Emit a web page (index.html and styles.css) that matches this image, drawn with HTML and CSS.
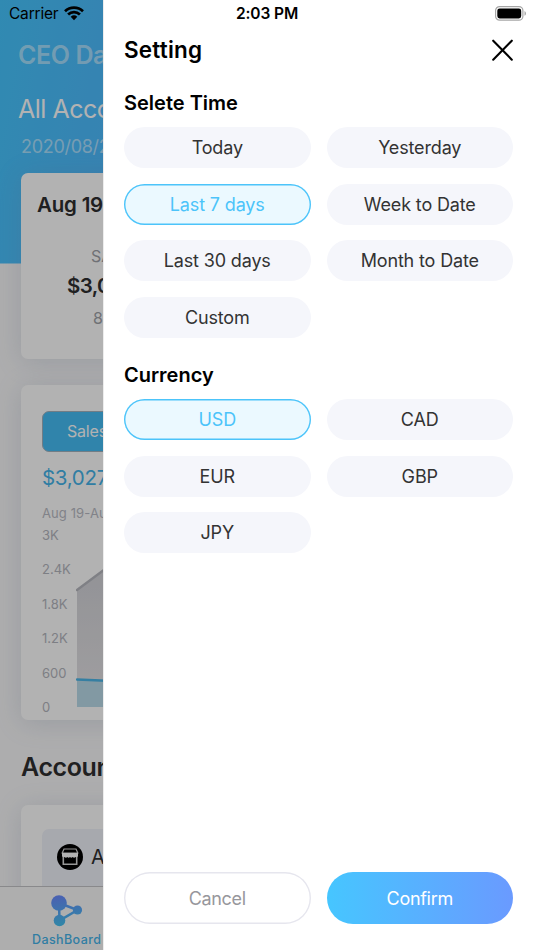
FILE: index.html
```html
<!DOCTYPE html>
<html lang="en">
<head>
  <meta charset="UTF-8">
  <meta name="viewport" content="width=device-width, initial-scale=1.0">
  <title>Setting</title>
  <link rel="stylesheet" href="styles.css">
</head>
<body>
  <div class="screen">
    <div class="dashboard">
      <div class="content">
        <h1 class="brand">CEO Da</h1>
        <div class="account">All Acco</div>
        <div class="date">2020/08/2</div>

        <div class="card summary">
          <div class="summary-title">Aug 19</div>
          <div class="summary-label">SA</div>
          <div class="summary-value">$3,0</div>
          <div class="summary-count">8</div>
        </div>

        <div class="card chart-card">
          <div class="tab">Sales</div>
          <div class="total">$3,027</div>
          <div class="range">Aug 19-Au</div>
          <div class="chart">
            <div class="axis">
              <span>3K</span>
              <span>2.4K</span>
              <span>1.8K</span>
              <span>1.2K</span>
              <span>600</span>
              <span>0</span>
            </div>
            <svg class="plot" width="60" height="190" viewBox="0 0 60 190">
              <defs>
                <linearGradient id="area" x1="0" y1="0" x2="0" y2="1">
                  <stop offset="0" stop-color="#cfd0d6"/>
                  <stop offset="1" stop-color="#e6e4e6"/>
                </linearGradient>
              </defs>
              <path d="M1 63 L60 19 V180 H1 Z" fill="url(#area)"/>
              <path d="M1 152.5 L60 155 V180 H1 Z" fill="#bbdcea"/>
              <path d="M1 63 L60 19" stroke="#b7b8bf" stroke-width="2.4" stroke-linecap="round"/>
              <path d="M1 152.5 L60 155" stroke="#4cb6e8" stroke-width="2.4" stroke-linecap="round"/>
            </svg>
          </div>
        </div>

        <h2 class="accounts-title">Accoun</h2>
        <div class="card accounts">
          <div class="account-row">
            <svg width="26" height="26" viewBox="0 0 26 26">
              <circle cx="13" cy="13" r="13" fill="#000"/>
              <g fill="none" stroke="#d8d8d8">
                <path d="M7 5 H19 L20.800 9 H5.200 Z" stroke-width="1.200"/>
                <path d="M6.300 12 V20.300 H19.700 V12" stroke-width="1.600"/>
              </g>
              <path d="M5 9 H21 V12 Q20 14 18.500 13 Q17 14.300 15.700 13 Q14.300 14.300 13 13 Q11.700 14.300 10.300 13 Q9 14.300 7.500 13 Q6 14 5 12 Z" fill="#fff"/>
            </svg>
            <span>A</span>
          </div>
        </div>
      </div>

      <div class="tabbar">
        <svg width="34" height="34" viewBox="0 0 34 34">
          <defs>
            <linearGradient id="nodes" gradientUnits="userSpaceOnUse" x1="10" y1="2" x2="14" y2="31">
              <stop offset="0" stop-color="#6a8cff"/>
              <stop offset="1" stop-color="#46c0f0"/>
            </linearGradient>
          </defs>
          <path d="M9 9 L27.500 16 L9.500 26.500 Z" fill="none" stroke="url(#nodes)" stroke-width="2.500"/>
          <g fill="url(#nodes)">
            <circle cx="9" cy="9" r="7.800"/>
            <circle cx="27.500" cy="16" r="4.600"/>
            <circle cx="9.500" cy="26.500" r="5.800"/>
          </g>
        </svg>
        <span>DashBoard</span>
      </div>
    </div>

    <div class="mask"></div>

    <div class="drawer">
      <div class="drawer-head">
        <h2>Setting</h2>
        <svg width="21" height="22" viewBox="0 0 21 22">
          <path d="M1.200 1.700 L19.800 20.700 M19.800 1.700 L1.200 20.700" stroke="#000" stroke-width="2.100" stroke-linecap="round"/>
        </svg>
      </div>

      <h3 class="time-title">Selete Time</h3>
      <div class="options">
        <div class="option">Today</div>
        <div class="option">Yesterday</div>
        <div class="option active">Last 7 days</div>
        <div class="option">Week to Date</div>
        <div class="option">Last 30 days</div>
        <div class="option">Month to Date</div>
        <div class="option">Custom</div>
      </div>

      <h3 class="currency-title">Currency</h3>
      <div class="options">
        <div class="option active">USD</div>
        <div class="option">CAD</div>
        <div class="option">EUR</div>
        <div class="option">GBP</div>
        <div class="option">JPY</div>
      </div>

      <div class="actions">
        <div class="btn cancel">Cancel</div>
        <div class="btn confirm">Confirm</div>
      </div>
    </div>

    <div class="statusbar">
      <div class="carrier">
        <span>Carrier</span>
        <svg width="20" height="15" viewBox="0 0 20 15">
          <g fill="none" stroke="#000" stroke-width="2.700">
            <path d="M1 5.300 A13 13 0 0 1 19 5.300"/>
            <path d="M4.100 8.500 A8.500 8.500 0 0 1 15.900 8.500"/>
          </g>
          <path d="M6.700 10.800 A5 5 0 0 1 13.300 10.800 L10 14.300 Z" fill="#000"/>
        </svg>
      </div>
      <div class="clock">2:03 PM</div>
      <svg class="battery" width="32" height="15" viewBox="0 0 32 15">
        <rect x=".6" y=".6" width="27.300" height="13.600" rx="4" fill="none" stroke="#a6a6a6" stroke-width="1.200"/>
        <rect x="2.300" y="2.400" width="23.900" height="10" rx="2.300" fill="#000"/>
        <path d="M29.500 5 Q31 5.700 31 7.400 Q31 9.100 29.500 9.800 Z" fill="#a6a6a6"/>
      </svg>
    </div>
  </div>
</body>
</html>
```
FILE: styles.css
```css
* {
  box-sizing: border-box;
}
body {
  margin: 0;
  font-family: Inter, "Liberation Sans", sans-serif;
}
h1, h2, h3 {
  margin: 0;
  font-weight: 600;
}
svg {
  display: block;
  flex: none;
}
.screen {
  position: relative;
  width: 534px;
  height: 950px;
  overflow: hidden;
  background: #fff;
}

/* dashboard behind the drawer */
.dashboard {
  display: flex;
  flex-direction: column;
  width: 534px;
  height: 950px;
  white-space: nowrap;
  background: linear-gradient(100deg, #46c6ff, #6a9aff) 0 0 / 534px 263.5px no-repeat #f8f8f9;
}
.content {
  flex: 1;
  min-height: 0;
  overflow: hidden;
  padding: 39px 0 0 21px;
}
.brand {
  margin-left: -3px;
  font-size: 25px;
  line-height: 32px;
  letter-spacing: -0.4px;
  color: rgba(255, 255, 255, 0.52);
}
.account {
  margin: 22px 0 0 -3px;
  font-size: 25px;
  line-height: 32px;
  letter-spacing: -0.5px;
  color: #fff;
}
.date {
  margin-top: 12px;
  font-size: 18px;
  line-height: 20px;
  letter-spacing: -0.3px;
  color: rgba(255, 255, 255, 0.55);
}
.card {
  width: 492px;
  background: #fff;
  border-radius: 7px;
  box-shadow: 0 3px 26px rgba(130, 145, 180, 0.24);
}
.summary {
  height: 186px;
  margin-top: 16px;
  padding: 20px 0 0 16px;
  color: #2e2e30;
}
.summary-title {
  font-size: 20.5px;
  font-weight: 600;
  line-height: 24px;
  letter-spacing: -0.2px;
}
.summary-label {
  margin: 29px 0 0 54px;
  font-size: 16px;
  line-height: 20px;
  color: #a0a2a8;
}
.summary-value {
  margin: 8px 0 0 30px;
  font-size: 20.5px;
  font-weight: 600;
  line-height: 24px;
  letter-spacing: -0.6px;
}
.summary-count {
  margin: 10px 0 0 56px;
  font-size: 16px;
  line-height: 20px;
  color: #a0a2a8;
}
.chart-card {
  height: 335px;
  margin-top: 26px;
  padding: 26px 0 0 21px;
}
.tab {
  width: 150px;
  height: 41px;
  padding-left: 24px;
  border: 1px solid #a3b4c0;
  border-radius: 7px;
  background: #46bdf5;
  font-size: 16px;
  line-height: 39px;
  letter-spacing: -0.2px;
  color: #fff;
}
.total {
  margin-top: 14px;
  font-size: 20.5px;
  line-height: 24px;
  letter-spacing: -0.3px;
  color: #46b4ea;
}
.range {
  margin-top: 14.500px;
  font-size: 13px;
  line-height: 16px;
  letter-spacing: 0.1px;
  color: #b9bbc4;
}
.chart {
  display: flex;
  margin-top: 6px;
}
.axis {
  display: flex;
  flex-direction: column;
  gap: 18.5px;
  width: 34px;
  font-size: 13px;
  line-height: 16px;
  color: #b4b6be;
}
.accounts-title {
  margin-top: 31px;
  font-size: 25px;
  line-height: 32px;
  letter-spacing: -0.4px;
  color: #2e2e30;
}
.accounts {
  height: 200px;
  margin-top: 22px;
  padding: 24px 21px 0;
}
.account-row {
  display: flex;
  align-items: center;
  gap: 8px;
  height: 100px;
  padding: 0 15px 44px;
  border-radius: 7px;
  background: #f0f2fa;
  font-size: 20px;
  color: #2e2e30;
}
.tabbar {
  display: flex;
  flex-direction: column;
  align-items: flex-start;
  height: 64px;
  padding: 7px 0 0 32px;
  border-top: 1px solid #c5c5c7;
  background: #fafafa;
  font-size: 12.5px;
  font-weight: 500;
  line-height: 16px;
  letter-spacing: 0.4px;
  color: #46b4ea;
}
.tabbar svg {
  margin-left: 18px;
}
.tabbar span {
  margin-top: 4px;
}

.mask {
  position: absolute;
  inset: 0;
  background: rgba(0, 0, 0, 0.3);
}

/* setting drawer */
.drawer {
  position: absolute;
  top: 0;
  right: 0;
  bottom: 0;
  display: flex;
  flex-direction: column;
  width: 431px;
  padding: 34px 21px 26px 20px;
  border-left: 1px solid #ececec;
  background: #fff;
}
.drawer-head {
  display: flex;
  align-items: center;
  justify-content: space-between;
  height: 32px;
}
.drawer-head h2 {
  font-size: 22.5px;
  line-height: 32px;
  letter-spacing: 0.2px;
}
h3 {
  font-size: 20px;
  line-height: 24px;
}
.time-title {
  margin-top: 24.500px;
}
.currency-title {
  margin-top: 25px;
}
.options {
  display: grid;
  grid-template-columns: 1fr 1fr;
  gap: 15.600px 16px;
  margin-top: 12.500px;
}
.option {
  display: flex;
  align-items: center;
  justify-content: center;
  height: 41px;
  border-radius: 21px;
  background: #f5f6fb;
  font-size: 18px;
  letter-spacing: -0.15px;
  color: #333;
}
.option.active {
  background: #ebf9ff;
  box-shadow: inset 0 0 0 1.400px #4cc4fa;
  color: #4cc4fa;
}
.actions {
  display: grid;
  grid-template-columns: 1fr 1fr;
  gap: 16px;
  margin-top: auto;
}
.btn {
  display: flex;
  align-items: center;
  justify-content: center;
  height: 52px;
  border-radius: 26px;
  font-size: 18px;
  letter-spacing: -0.3px;
}
.cancel {
  box-shadow: inset 0 0 0 1.400px #e6e6ee;
  color: #97979c;
}
.confirm {
  background: linear-gradient(90deg, #46c6ff, #6a9aff);
  color: #fff;
}

.statusbar {
  position: absolute;
  top: 0;
  left: 0;
  right: 0;
  display: grid;
  grid-template-columns: 1fr auto 1fr;
  align-items: center;
  height: 27px;
  padding: 0 7px 0 9px;
  font-size: 15.5px;
}
.carrier {
  display: flex;
  align-items: center;
  gap: 6px;
  letter-spacing: -0.2px;
}
.clock {
  margin-left: -2px;
  font-weight: 600;
  letter-spacing: -0.1px;
}
.battery {
  justify-self: end;
}
```
